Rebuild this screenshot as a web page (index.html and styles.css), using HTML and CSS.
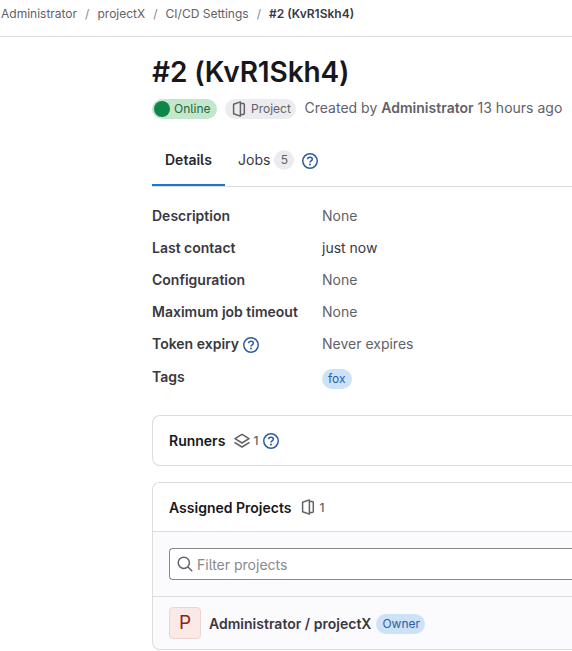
FILE: index.html
```html
<!DOCTYPE html>
<html lang="en">
<head>
<meta charset="utf-8">
<title>#2 (KvR1Skh4)</title>
<link rel="stylesheet" href="styles.css">
</head>
<body>
<svg class="sprite" aria-hidden="true">
  <symbol id="help" viewBox="0 0 16 16"><circle cx="8" cy="8" r="7.25" fill="none" stroke="currentColor" stroke-width="1.5"/><path d="M5.7 6.3C5.7 5 6.7 4.2 8 4.2s2.3.8 2.3 2c0 1.6-2.3 1.6-2.3 3.3" fill="none" stroke="currentColor" stroke-width="1.5"/><circle cx="8" cy="11.6" r="1" fill="currentColor"/></symbol>
  <symbol id="project" viewBox="0 0 16 16"><path d="M9.4.9 2.6 3.3v9.4l6.8 2.4zM9.4 2.5h2.9a1 1 0 0 1 1 1v9a1 1 0 0 1-1 1H9.4" fill="none" stroke="currentColor" stroke-width="1.5" stroke-linejoin="round"/></symbol>
  <symbol id="layers" viewBox="0 0 16 16"><path d="M8 1.3 15 5.6 8 10 1 5.6zM.4 9.3 8 14l7.6-4.7" fill="none" stroke="currentColor" stroke-width="1.5" stroke-linejoin="round"/></symbol>
  <symbol id="search" viewBox="0 0 16 16"><path d="m11 11 4.2 4.2" fill="none" stroke="currentColor" stroke-width="1.5"/><circle cx="6.8" cy="6.8" r="5.6" fill="none" stroke="currentColor" stroke-width="1.5"/></symbol>
</svg>
<nav class="crumbs"><a>Administrator</a><i>/</i><a>projectX</a><i>/</i><a>CI/CD Settings</a><i>/</i><b>#2 (KvR1Skh4)</b></nav>
<main>
  <h1>#2 (KvR1Skh4)</h1>
  <div class="meta">
    <span class="badge online"><span class="dot"></span>Online</span>
    <span class="badge type"><svg class="icon"><use href="#project"/></svg>Project</span>
    <span class="created">Created by <b>Administrator</b> 13 hours ago</span>
  </div>
  <div class="tabs">
    <div class="tab active">Details</div>
    <div class="tab">Jobs<span class="count">5</span><svg class="icon help"><use href="#help"/></svg></div>
  </div>
  <dl>
    <dt>Description</dt><dd>None</dd>
    <dt>Last contact</dt><dd class="dark">just now</dd>
    <dt>Configuration</dt><dd>None</dd>
    <dt>Maximum job timeout</dt><dd>None</dd>
    <dt>Token expiry <svg class="icon help"><use href="#help"/></svg></dt><dd>Never expires</dd>
    <dt class="tags">Tags</dt><dd><span class="badge info tag">fox</span></dd>
  </dl>
  <section class="card runners">
    <h2>Runners</h2><svg class="icon"><use href="#layers"/></svg><span class="num">1</span><svg class="icon help"><use href="#help"/></svg>
  </section>
  <section class="card projects">
    <header><h2>Assigned Projects</h2><svg class="icon"><use href="#project"/></svg><span class="num">1</span></header>
    <div class="filter"><div class="input"><svg class="icon"><use href="#search"/></svg><span>Filter projects</span></div></div>
    <div class="row"><span class="avatar">P</span><b>Administrator / projectX</b><span class="badge info">Owner</span></div>
  </section>
</main>
</body>
</html>
```
FILE: styles.css
```css
* { box-sizing: border-box; }
body {
  margin: 0;
  height: 651px;
  overflow: hidden;
  background: #fff;
  color: #3a383f;
  font: 14px/20px Inter, "Liberation Sans", sans-serif;
  font-feature-settings: "cv05";
  white-space: nowrap;
}
b, h1, h2, dt { font-weight: 600; }
.sprite { position: absolute; width: 0; height: 0; }
.icon { width: 16px; height: 16px; flex: none; color: #626168; }
.help { color: #2f5ca0; }

.crumbs {
  display: flex;
  height: 37px;
  padding: 4px 0 0 1px;
  border-bottom: 1px solid #dcdcde;
  font-size: 12px;
  color: #626168;
}
.crumbs i { width: 20.4px; text-align: center; font-style: normal; color: #89888d; }
.crumbs b { color: #3a383f; }

main { margin-left: 152px; padding-top: 17px; }
h1 { margin: 0; font-size: 28px; line-height: 36px; color: #18171d; letter-spacing: -.12px; }
.meta { display: flex; align-items: center; height: 20px; margin-top: 9px; }
.badge {
  display: inline-flex;
  align-items: center;
  height: 20px;
  padding: 0 8px;
  border-radius: 10px;
  font-size: 12px;
  line-height: 20px;
}
.online { width: 65px; padding: 0 2px; background: #c3e6cd; color: #24663b; }
.dot { width: 16px; height: 16px; margin-right: 4px; border-radius: 50%; background: #108548; }
.type { width: 71px; margin-left: 8px; padding: 0 6px; background: #ececef; color: #626168; }
.type .icon { margin-right: 4px; }
.info { background: #cbe2f9; color: #2f5ca0; }
.created { margin: -2px 0 0 8.5px; color: #626168; letter-spacing: .01px; }

.tabs { display: flex; height: 49px; margin-top: 19px; border-bottom: 1px solid #dcdcde; }
.tab { display: flex; align-items: center; height: 48px; padding: 0 13px 4px; color: #3a383f; }
.active { width: 73px; padding-bottom: 2px; border-bottom: 2px solid #1f75cb; font-weight: 600; color: #28272d; }
.tab .icon { margin-top: 1px; }
.count { width: 20px; height: 20px; margin: 0 8px 0 4px; border-radius: 10px; background: #ececef; color: #626168; font-size: 12px; text-align: center; }

dl { display: grid; grid-template-columns: 170px 1fr; row-gap: 12px; margin: 19px 0 0; }
dt { display: flex; align-items: center; gap: 4px; }
dd { margin: 0; color: #626168; }
.dark { color: #3a383f; }
dt .icon { margin-top: 2px; }
.tags { align-self: start; padding-top: 1px; }
.tag { margin-top: 3px; padding: 0 6px; vertical-align: top; }

.card { border: 1px solid #dcdcde; border-right: 0; border-radius: 8px 0 0 8px; background: #fff; }
.card h2 { margin: 0; font-size: 14px; color: #18171d; }
.runners { display: flex; align-items: center; height: 51px; margin-top: 26px; padding-left: 16px; }
.runners .icon { margin-left: 8.5px; }
.num { margin-left: 3.5px; font-size: 12px; font-weight: 500; color: #626168; }
.runners .num + .icon { margin-left: 4.8px; }
.projects { height: 168px; margin-top: 16px; background: #fbfafd; overflow: hidden; }
.projects header { display: flex; align-items: center; height: 49px; padding: 1px 0 0 16px; border-bottom: 1px solid #dcdcde; background: #fff; }
header .icon { margin-left: 8.5px; margin-top: -1px; }
.filter { height: 65px; padding: 16px 0 16px 16px; border-bottom: 1px solid #dcdcde; }
.input { display: flex; align-items: center; height: 32px; padding-left: 7px; border: 1px solid #89888d; border-right: 0; border-radius: 4px 0 0 4px; background: #fff; color: #89888d; }
.input .icon { margin-right: 4px; }
.input span { padding-top: 2px; }
.row { display: flex; align-items: center; height: 54px; padding-left: 16px; letter-spacing: .01px; }
.avatar { width: 32px; height: 32px; margin: -2px 8px 0 0; border: 1px solid #eed3d1; border-radius: 4px; background: #fbe9e7; color: #8b2615; font-size: 19px; line-height: 30px; text-align: center; }
.row .badge { width: 49px; margin-left: 5px; padding: 0 6px; letter-spacing: 0; }
```
